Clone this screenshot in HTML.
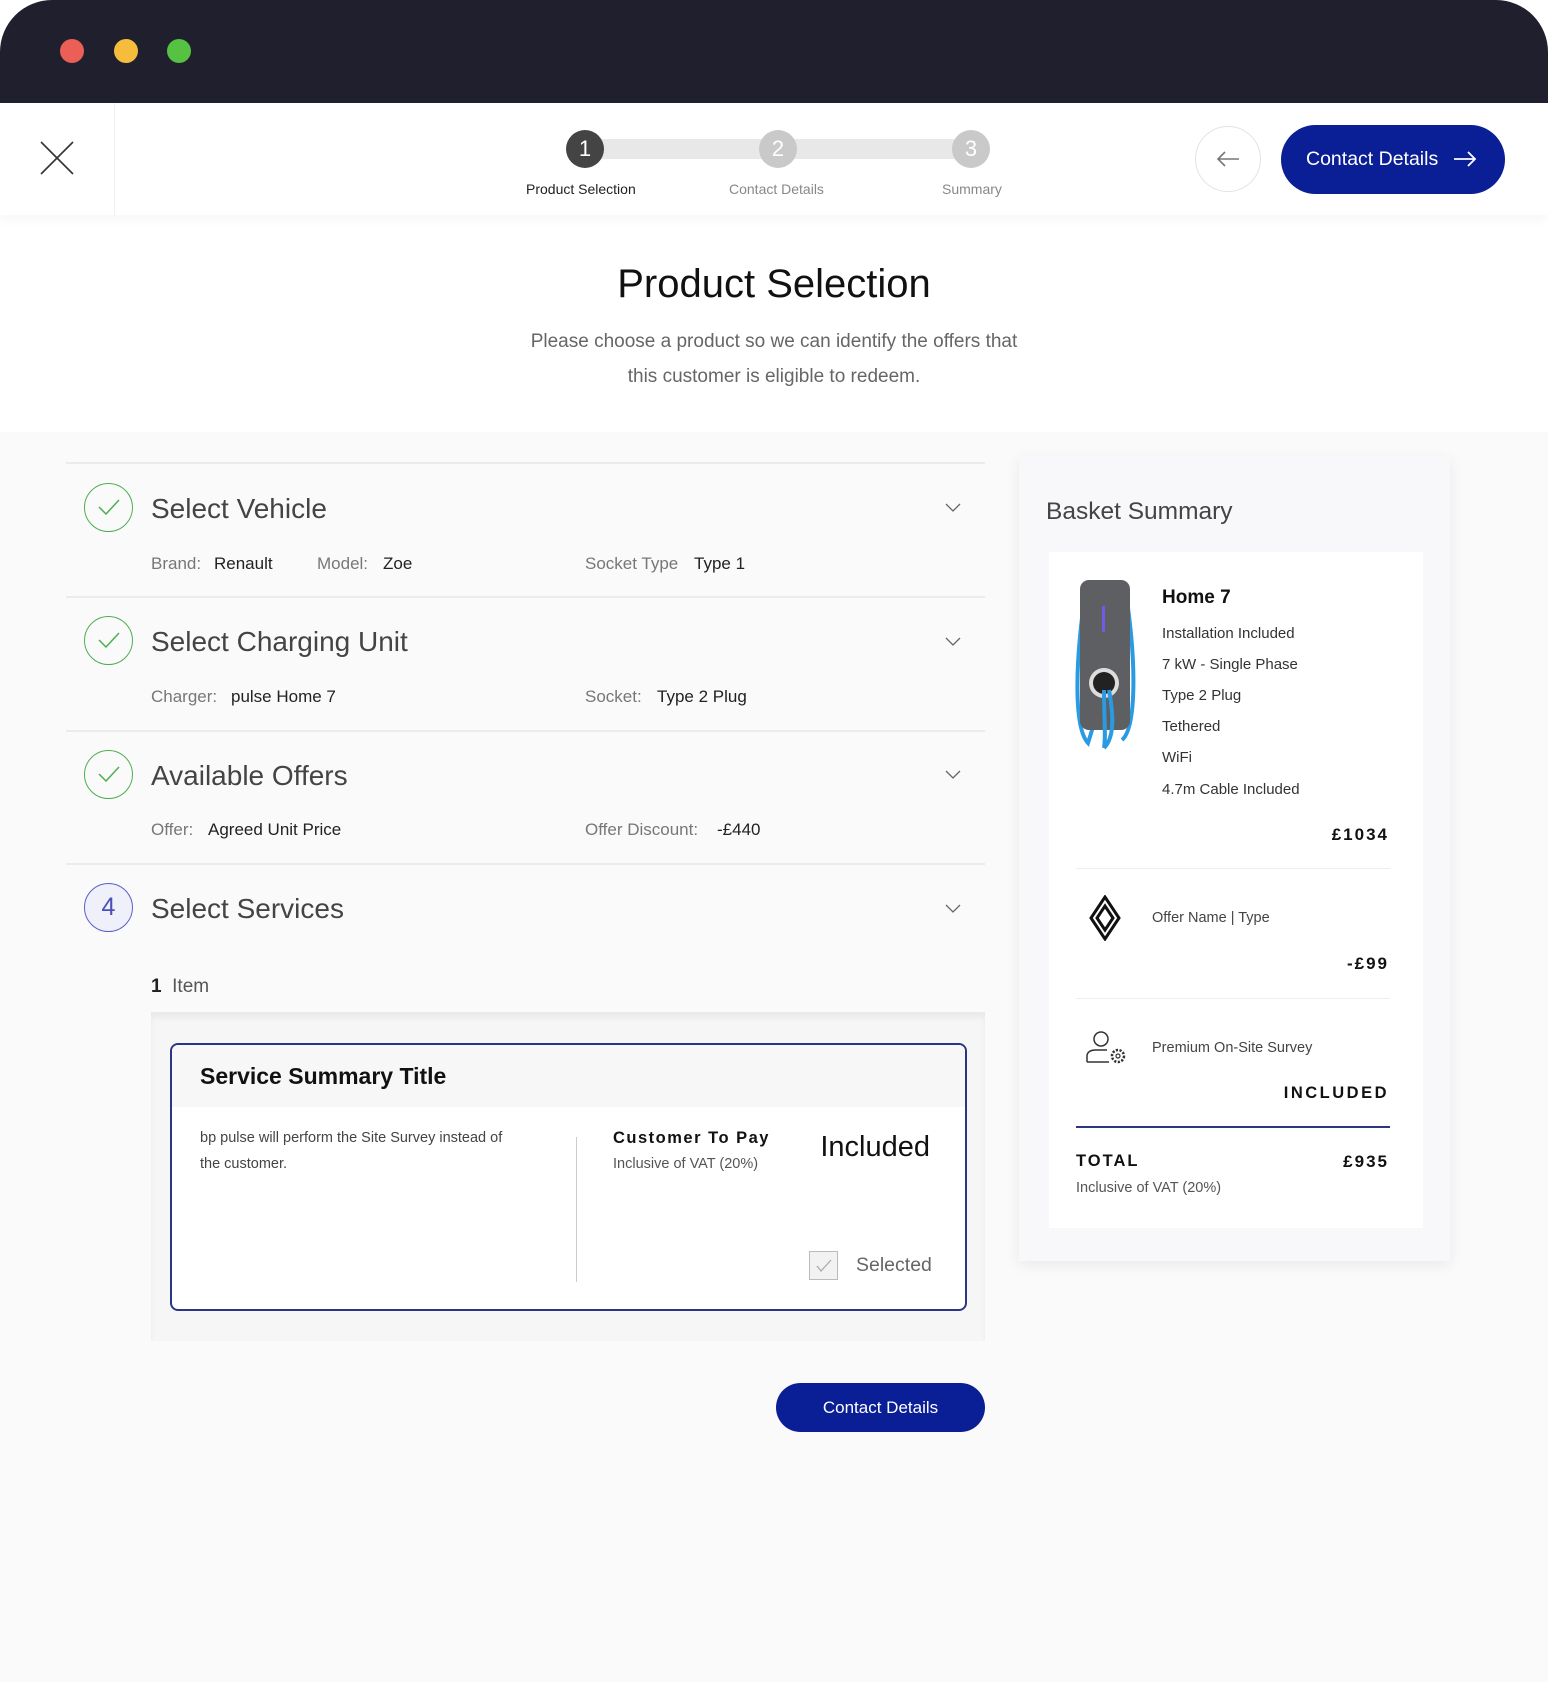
<!DOCTYPE html>
<html><head><meta charset="utf-8"><style>
*{margin:0;padding:0;box-sizing:border-box}
body{width:1548px;height:1682px;background:#fff;font-family:"Liberation Sans",Arial,sans-serif;position:relative;overflow:hidden;color:#222}
.a{position:absolute;white-space:nowrap;line-height:1}
.tb{position:absolute;left:0;top:0;width:1548px;height:103px;background:#1f1f2e;border-radius:52px 52px 0 0}
.dot{position:absolute;width:24px;height:24px;border-radius:50%;top:39px}
.step{position:absolute;width:38px;height:38px;border-radius:50%;top:130px;color:#fff;font-size:22px;text-align:center;line-height:38px}
.lbl{color:#777;font-size:17px}
.val{color:#222;font-size:17px}
.sep{position:absolute;left:66px;width:919px;height:2px;background:#ebebeb}
.ic{position:absolute;left:84px;width:49px;height:49px;border-radius:50%;border:1.5px solid #4caf50}
.h{font-size:28px;color:#444}
.feat{font-size:15px;color:#333}
</style></head><body>
<div class="tb"></div>
<div class="dot" style="left:60px;background:#ec5f57"></div>
<div class="dot" style="left:114px;background:#f5bd3b"></div>
<div class="dot" style="left:167px;background:#57c142"></div>

<div style="position:absolute;left:0;top:103px;width:1548px;height:112px;background:#fff;box-shadow:0 6px 10px rgba(0,0,0,0.03)"></div>
<div style="position:absolute;left:114px;top:103px;width:1px;height:112px;background:#f0f0f0"></div>
<svg class="a" style="left:40px;top:141px" width="34" height="34"><path d="M1 1L33 33M33 1L1 33" stroke="#333" stroke-width="1.6"/></svg>
<div style="position:absolute;left:600px;top:139px;width:370px;height:20px;background:#e8e8e8"></div>
<div class="step" style="left:566px;background:#444">1</div>
<div class="step" style="left:759px;background:#c9c9c9">2</div>
<div class="step" style="left:952px;background:#c9c9c9">3</div>
<div class="a" style="left:526px;top:182px;font-size:14px;color:#222">Product Selection</div>
<div class="a" style="left:729px;top:182px;font-size:14px;color:#888">Contact Details</div>
<div class="a" style="left:942px;top:182px;font-size:14px;color:#888">Summary</div>
<div style="position:absolute;left:1195px;top:126px;width:66px;height:66px;border-radius:50%;border:1px solid #e4e4e4;background:#fff"></div>
<svg class="a" style="left:1216px;top:151px" width="24" height="16"><path d="M23 8H2M9 1L2 8L9 15" stroke="#777" stroke-width="1.6" fill="none"/></svg>
<div style="position:absolute;left:1281px;top:125px;width:224px;height:69px;border-radius:35px;background:#0a1e96"></div>
<div class="a" style="left:1306px;top:150px;font-size:19.5px;color:#fff">Contact Details</div>
<svg class="a" style="left:1453px;top:151px" width="24" height="16"><path d="M1 8H22M15 1L22 8L15 15" stroke="#fff" stroke-width="1.8" fill="none"/></svg>

<div class="a" style="left:0;width:1548px;text-align:center;top:264px;font-size:40px;color:#111">Product Selection</div>
<div class="a" style="left:0;width:1548px;text-align:center;top:332px;font-size:19px;color:#666">Please choose a product so we can identify the offers that</div>
<div class="a" style="left:0;width:1548px;text-align:center;top:367px;font-size:19px;color:#666">this customer is eligible to redeem.</div>

<div style="position:absolute;left:0;top:432px;width:1548px;height:1250px;background:#fafafa"></div>

<div class="sep" style="top:462px"></div>
<div class="sep" style="top:596px"></div>
<div class="sep" style="top:730px"></div>
<div class="sep" style="top:863px"></div>

<div class="ic" style="top:483px"></div><svg class="a" style="left:98px;top:499px" width="22" height="16"><path d="M1 8L8 15L21 1" stroke="#4caf50" stroke-width="1.5" fill="none"/></svg>
<div class="a h" style="left:151px;top:495px">Select Vehicle</div>
<div class="a lbl" style="left:151px;top:555px">Brand:</div><div class="a val" style="left:214px;top:555px">Renault</div>
<div class="a lbl" style="left:317px;top:555px">Model:</div><div class="a val" style="left:383px;top:555px">Zoe</div>
<div class="a lbl" style="left:585px;top:555px">Socket Type</div><div class="a val" style="left:694px;top:555px">Type 1</div>

<div class="ic" style="top:616px"></div><svg class="a" style="left:98px;top:632px" width="22" height="16"><path d="M1 8L8 15L21 1" stroke="#4caf50" stroke-width="1.5" fill="none"/></svg>
<div class="a h" style="left:151px;top:628px">Select Charging Unit</div>
<div class="a lbl" style="left:151px;top:688px">Charger:</div><div class="a val" style="left:231px;top:688px">pulse Home 7</div>
<div class="a lbl" style="left:585px;top:688px">Socket:</div><div class="a val" style="left:657px;top:688px">Type 2 Plug</div>

<div class="ic" style="top:750px"></div><svg class="a" style="left:98px;top:766px" width="22" height="16"><path d="M1 8L8 15L21 1" stroke="#4caf50" stroke-width="1.5" fill="none"/></svg>
<div class="a h" style="left:151px;top:762px">Available Offers</div>
<div class="a lbl" style="left:151px;top:821px">Offer:</div><div class="a val" style="left:208px;top:821px">Agreed Unit Price</div>
<div class="a lbl" style="left:585px;top:821px">Offer Discount:</div><div class="a val" style="left:717px;top:821px">-£440</div>

<div style="position:absolute;left:84px;top:883px;width:49px;height:49px;border-radius:50%;border:1.5px solid #5a5fc8;background:#f0f0fb;color:#4a50b8;font-size:25px;text-align:center;line-height:46px">4</div>
<div class="a h" style="left:151px;top:895px">Select Services</div>

<svg class="a" style="left:945px;top:503px" width="16" height="10"><path d="M1 1L8 8L15 1" stroke="#666" stroke-width="1.3" fill="none"/></svg>
<svg class="a" style="left:945px;top:637px" width="16" height="10"><path d="M1 1L8 8L15 1" stroke="#666" stroke-width="1.3" fill="none"/></svg>
<svg class="a" style="left:945px;top:770px" width="16" height="10"><path d="M1 1L8 8L15 1" stroke="#666" stroke-width="1.3" fill="none"/></svg>
<svg class="a" style="left:945px;top:904px" width="16" height="10"><path d="M1 1L8 8L15 1" stroke="#666" stroke-width="1.3" fill="none"/></svg>

<div class="a" style="left:151px;top:977px;font-size:19px;color:#555"><b style="color:#222;font-weight:600">1</b>&nbsp; Item</div>

<div style="position:absolute;left:151px;top:1012px;width:834px;height:329px;background:#f6f6f6;box-shadow:inset 0 6px 6px rgba(0,0,0,0.05)"></div>
<div style="position:absolute;left:170px;top:1043px;width:797px;height:268px;border:2px solid #2b3585;border-radius:8px;background:#fff;overflow:hidden">
  <div style="height:62px;background:#f7f7f7"></div>
</div>
<div class="a" style="left:200px;top:1065px;font-size:23px;font-weight:bold;color:#111">Service Summary Title</div>
<div class="a" style="left:200px;top:1131px;font-size:14.5px;color:#444">bp pulse will perform the Site Survey instead of</div>
<div class="a" style="left:200px;top:1157px;font-size:14.5px;color:#444">the customer.</div>
<div style="position:absolute;left:576px;top:1137px;width:1px;height:145px;background:#ccc"></div>
<div class="a" style="left:613px;top:1130px;font-size:16.5px;font-weight:bold;letter-spacing:1.5px;color:#111">Customer To Pay</div>
<div class="a" style="left:613px;top:1157px;font-size:14.5px;color:#555">Inclusive of VAT (20%)</div>
<div class="a" style="left:810px;top:1133px;width:120px;text-align:right;font-size:29px;color:#111">Included</div>
<div style="position:absolute;left:809px;top:1251px;width:29px;height:29px;border:1.5px solid #bbb;background:#f2f2f2"></div>
<svg class="a" style="left:816px;top:1259px" width="16" height="13"><path d="M1 7L5 12L15 1" stroke="#aaa" stroke-width="1.3" fill="none"/></svg>
<div class="a" style="left:856px;top:1256px;font-size:19.5px;color:#666">Selected</div>

<div style="position:absolute;left:776px;top:1383px;width:209px;height:49px;border-radius:25px;background:#0a1e96;color:#fff;font-size:17px;text-align:center;line-height:49px">Contact Details</div>

<div style="position:absolute;left:1019px;top:456px;width:431px;height:805px;background:#f8f8fa;box-shadow:0 4px 14px rgba(0,0,0,0.07)"></div>
<div class="a" style="left:1046px;top:500px;font-size:24.5px;color:#444">Basket Summary</div>
<div style="position:absolute;left:1049px;top:552px;width:374px;height:676px;background:#fff"></div>
<svg class="a" style="left:1074px;top:578px" width="64" height="174" viewBox="0 0 64 174">
<path d="M8 40 C2 90 0 150 14 165 C22 140 28 120 20 105" stroke="#2a9be0" stroke-width="4" fill="none"/>
<path d="M54 30 C62 90 62 150 48 162" stroke="#2a9be0" stroke-width="4" fill="none"/>
<rect x="6" y="2" width="50" height="150" rx="9" fill="#5e5f63"/>
<rect x="28" y="28" width="3" height="26" fill="#6d5ce8"/>
<circle cx="30" cy="105" r="15" fill="#ddd"/><circle cx="30" cy="105" r="11" fill="#222"/>
<path d="M30 112 C30 140 32 160 30 170 M35 112 C40 140 40 160 30 170" stroke="#2a9be0" stroke-width="4" fill="none"/>
</svg>
<div class="a" style="left:1162px;top:588px;font-size:19px;font-weight:bold;color:#111">Home 7</div>
<div class="a feat" style="left:1162px;top:626px">Installation Included</div>
<div class="a feat" style="left:1162px;top:657px">7 kW - Single Phase</div>
<div class="a feat" style="left:1162px;top:688px">Type 2 Plug</div>
<div class="a feat" style="left:1162px;top:719px">Tethered</div>
<div class="a feat" style="left:1162px;top:750px">WiFi</div>
<div class="a feat" style="left:1162px;top:782px">4.7m Cable Included</div>
<div class="a" style="left:1250px;width:139px;text-align:right;top:826px;font-size:17px;font-weight:bold;letter-spacing:2px;color:#111">£1034</div>
<div style="position:absolute;left:1076px;top:868px;width:314px;height:1px;background:#eee"></div>
<svg class="a" style="left:1088px;top:895px" width="34" height="46" viewBox="0 0 34 46"><path d="M17 2L3 23L17 44L31 23Z" stroke="#111" stroke-width="3" fill="none" stroke-linejoin="miter"/><path d="M17 11L9 23L17 35L25 23Z" stroke="#111" stroke-width="3" fill="none"/></svg>
<div class="a" style="left:1152px;top:911px;font-size:14.5px;color:#444">Offer Name | Type</div>
<div class="a" style="left:1250px;width:139px;text-align:right;top:955px;font-size:17px;font-weight:bold;letter-spacing:2px;color:#111">-£99</div>
<div style="position:absolute;left:1076px;top:998px;width:314px;height:1px;background:#eee"></div>
<svg class="a" style="left:1085px;top:1030px" width="44" height="36" viewBox="0 0 44 36"><circle cx="16" cy="9" r="7" stroke="#333" stroke-width="1.5" fill="none"/><path d="M2 32V26C2 22 6 20 10 20H22" stroke="#333" stroke-width="1.5" fill="none"/><path d="M2 32H24" stroke="#333" stroke-width="1.5"/><circle cx="33" cy="26" r="6" stroke="#333" stroke-width="2.5" stroke-dasharray="2.2 1.5" fill="none"/><circle cx="33" cy="26" r="2" stroke="#333" stroke-width="1.2" fill="none"/></svg>
<div class="a" style="left:1152px;top:1041px;font-size:14.5px;color:#444">Premium On-Site Survey</div>
<div class="a" style="left:1250px;width:139px;text-align:right;top:1085px;font-size:16.5px;font-weight:bold;letter-spacing:2.5px;color:#111">INCLUDED</div>
<div style="position:absolute;left:1076px;top:1126px;width:314px;height:2px;background:#2b3585"></div>
<div class="a" style="left:1076px;top:1153px;font-size:16.5px;font-weight:bold;letter-spacing:2px;color:#111">TOTAL</div>
<div class="a" style="left:1250px;width:139px;text-align:right;top:1153px;font-size:17px;font-weight:bold;letter-spacing:2px;color:#111">£935</div>
<div class="a" style="left:1076px;top:1181px;font-size:14.5px;color:#555">Inclusive of VAT (20%)</div>
</body></html>
